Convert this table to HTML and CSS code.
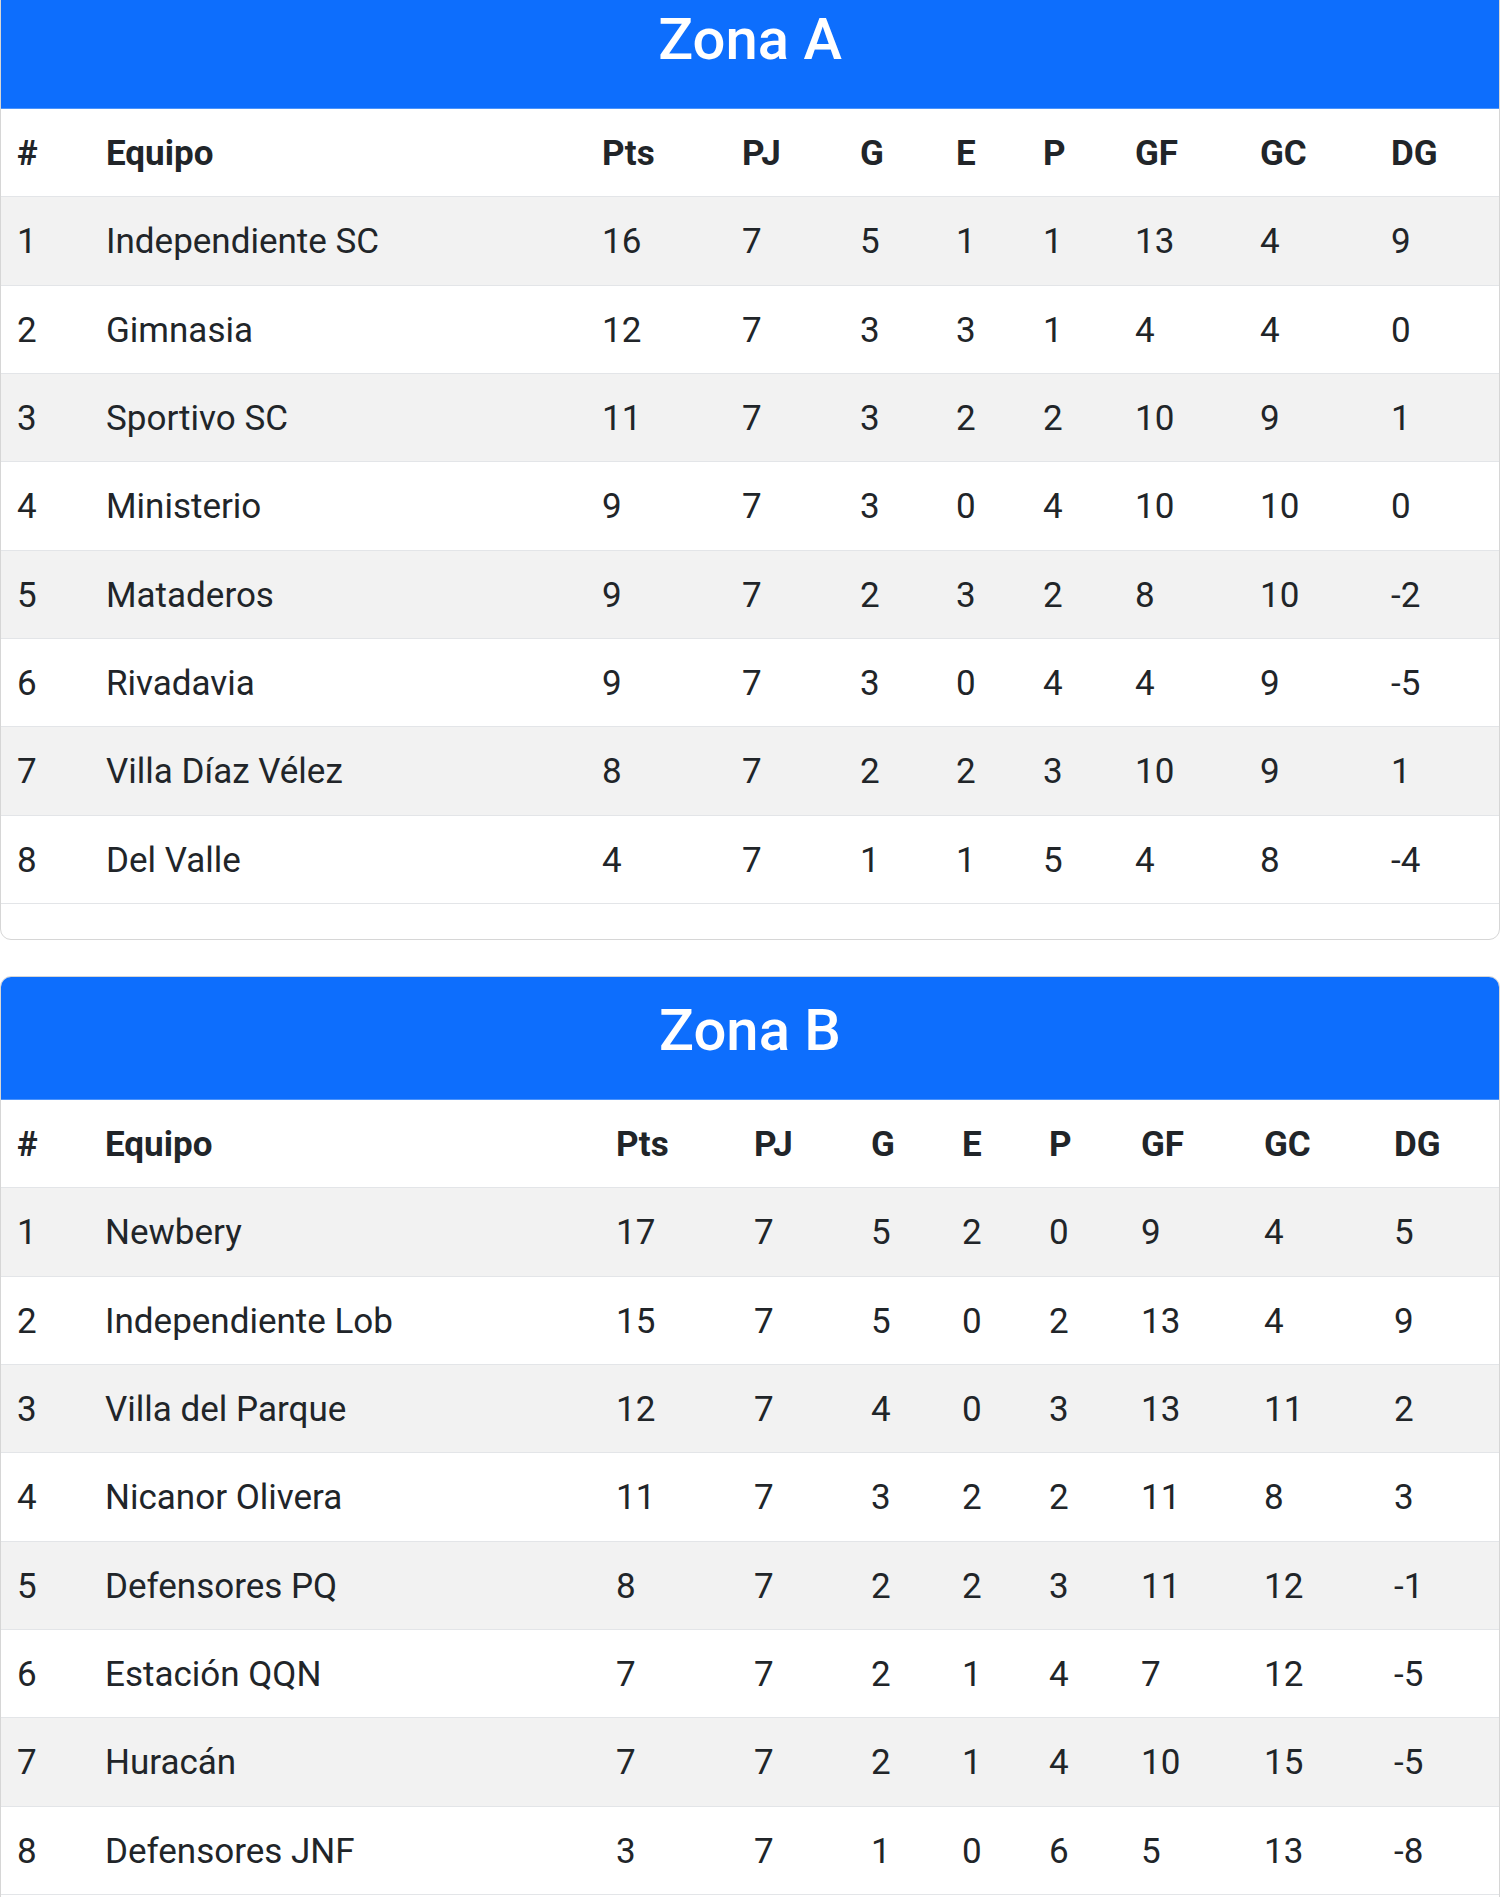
FILE: index.html
```html
<!DOCTYPE html>
<html lang="es">
<head>
<meta charset="utf-8">
<title>Posiciones</title>
<link rel="stylesheet" href="styles.css">
</head>
<body>
<main class="page">
  <section class="card card-first">
    <h2 class="card-header">Zona A</h2>
    <div class="card-body">
      <table class="tabla tabla-a">
        <colgroup>
          <col class="c-pos"><col class="c-equipo"><col class="c-pts"><col class="c-pj"><col class="c-g"><col class="c-e"><col class="c-p"><col class="c-gf"><col class="c-gc"><col class="c-dg">
        </colgroup>
        <thead>
          <tr><th>#</th><th>Equipo</th><th>Pts</th><th>PJ</th><th>G</th><th>E</th><th>P</th><th>GF</th><th>GC</th><th>DG</th></tr>
        </thead>
        <tbody>
          <tr><td>1</td><td>Independiente SC</td><td>16</td><td>7</td><td>5</td><td>1</td><td>1</td><td>13</td><td>4</td><td>9</td></tr>
          <tr><td>2</td><td>Gimnasia</td><td>12</td><td>7</td><td>3</td><td>3</td><td>1</td><td>4</td><td>4</td><td>0</td></tr>
          <tr><td>3</td><td>Sportivo SC</td><td>11</td><td>7</td><td>3</td><td>2</td><td>2</td><td>10</td><td>9</td><td>1</td></tr>
          <tr><td>4</td><td>Ministerio</td><td>9</td><td>7</td><td>3</td><td>0</td><td>4</td><td>10</td><td>10</td><td>0</td></tr>
          <tr><td>5</td><td>Mataderos</td><td>9</td><td>7</td><td>2</td><td>3</td><td>2</td><td>8</td><td>10</td><td>-2</td></tr>
          <tr><td>6</td><td>Rivadavia</td><td>9</td><td>7</td><td>3</td><td>0</td><td>4</td><td>4</td><td>9</td><td>-5</td></tr>
          <tr><td>7</td><td>Villa Díaz Vélez</td><td>8</td><td>7</td><td>2</td><td>2</td><td>3</td><td>10</td><td>9</td><td>1</td></tr>
          <tr><td>8</td><td>Del Valle</td><td>4</td><td>7</td><td>1</td><td>1</td><td>5</td><td>4</td><td>8</td><td>-4</td></tr>
        </tbody>
      </table>
    </div>
  </section>

  <section class="card">
    <h2 class="card-header">Zona B</h2>
    <div class="card-body">
      <table class="tabla tabla-b">
        <colgroup>
          <col class="c-pos"><col class="c-equipo"><col class="c-pts"><col class="c-pj"><col class="c-g"><col class="c-e"><col class="c-p"><col class="c-gf"><col class="c-gc"><col class="c-dg">
        </colgroup>
        <thead>
          <tr><th>#</th><th>Equipo</th><th>Pts</th><th>PJ</th><th>G</th><th>E</th><th>P</th><th>GF</th><th>GC</th><th>DG</th></tr>
        </thead>
        <tbody>
          <tr><td>1</td><td>Newbery</td><td>17</td><td>7</td><td>5</td><td>2</td><td>0</td><td>9</td><td>4</td><td>5</td></tr>
          <tr><td>2</td><td>Independiente Lob</td><td>15</td><td>7</td><td>5</td><td>0</td><td>2</td><td>13</td><td>4</td><td>9</td></tr>
          <tr><td>3</td><td>Villa del Parque</td><td>12</td><td>7</td><td>4</td><td>0</td><td>3</td><td>13</td><td>11</td><td>2</td></tr>
          <tr><td>4</td><td>Nicanor Olivera</td><td>11</td><td>7</td><td>3</td><td>2</td><td>2</td><td>11</td><td>8</td><td>3</td></tr>
          <tr><td>5</td><td>Defensores PQ</td><td>8</td><td>7</td><td>2</td><td>2</td><td>3</td><td>11</td><td>12</td><td>-1</td></tr>
          <tr><td>6</td><td>Estación QQN</td><td>7</td><td>7</td><td>2</td><td>1</td><td>4</td><td>7</td><td>12</td><td>-5</td></tr>
          <tr><td>7</td><td>Huracán</td><td>7</td><td>7</td><td>2</td><td>1</td><td>4</td><td>10</td><td>15</td><td>-5</td></tr>
          <tr><td>8</td><td>Defensores JNF</td><td>3</td><td>7</td><td>1</td><td>0</td><td>6</td><td>5</td><td>13</td><td>-8</td></tr>
        </tbody>
      </table>
    </div>
  </section>
</main>
</body>
</html>
```

FILE: styles.css
```css
* {
  box-sizing: border-box;
}

html, body {
  margin: 0;
  padding: 0;
  background: #ffffff;
}

body {
  font-family: Roboto, "Liberation Sans", Arial, sans-serif;
  color: #212529;
  overflow: hidden;
}

.page {
  display: flex;
  flex-direction: column;
  gap: 36px;
}

.card {
  border: 1px solid #d6d6d6;
  border-radius: 11px;
  overflow: hidden;
  background: #ffffff;
}

.card-first {
  margin-top: -15px;
}

.card-header {
  margin: 0;
  background: #0d6efd;
  color: #ffffff;
  text-align: center;
  font-size: 58px;
  font-weight: 500;
  line-height: 67px;
  padding: 20px 0 35px;
  border-bottom: 1px solid #4c94fb;
}

.card-body {
  padding-bottom: 35px;
}

.tabla {
  width: 100%;
  border-collapse: collapse;
  table-layout: fixed;
}

.tabla th,
.tabla td {
  text-align: left;
  font-size: 35px;
  line-height: 39.33px;
  padding: 25px 0 23px 16px;
  border-bottom: 1px solid #e3e5e8;
  white-space: nowrap;
}

.tabla th {
  font-weight: 700;
}

.tabla td {
  font-weight: 400;
}

.tabla tbody tr:nth-child(odd) {
  background: #f2f2f2;
}

/* Zona A column widths */
.tabla-a .c-pos { width: 89px; }
.tabla-a .c-equipo { width: 496px; }
.tabla-a .c-pts { width: 140px; }
.tabla-a .c-pj { width: 118px; }
.tabla-a .c-g { width: 96px; }
.tabla-a .c-e { width: 87px; }
.tabla-a .c-p { width: 92px; }
.tabla-a .c-gf { width: 125px; }
.tabla-a .c-gc { width: 131px; }
.tabla-a .c-dg { width: 124px; }

/* Zona B column widths */
.tabla-b .c-pos { width: 88px; }
.tabla-b .c-equipo { width: 511px; }
.tabla-b .c-pts { width: 138px; }
.tabla-b .c-pj { width: 117px; }
.tabla-b .c-g { width: 91px; }
.tabla-b .c-e { width: 87px; }
.tabla-b .c-p { width: 92px; }
.tabla-b .c-gf { width: 123px; }
.tabla-b .c-gc { width: 130px; }
.tabla-b .c-dg { width: 121px; }
```
